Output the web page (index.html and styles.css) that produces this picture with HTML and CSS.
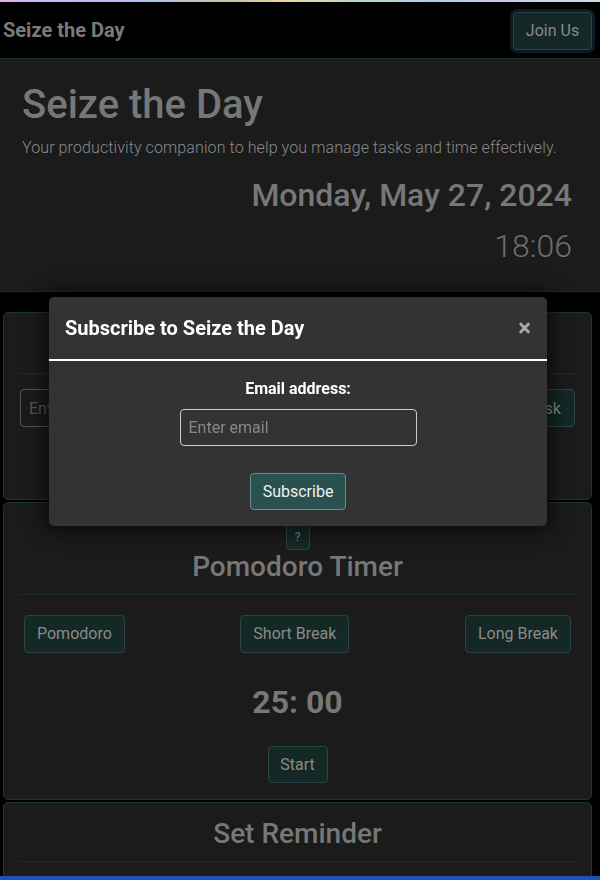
FILE: index.html
```html
<!DOCTYPE html>
<html lang="en">
<head>
<meta charset="utf-8">
<title>Seize the Day</title>
<link rel="stylesheet" href="styles.css">
</head>
<body>
<div class="rainbow"></div>
<nav class="navbar">
  <span class="brand">Seize the Day</span>
  <button class="btn btn-join">Join Us</button>
</nav>
<header class="hero">
  <h1 class="hero-title">Seize the Day</h1>
  <p class="hero-sub">Your productivity companion to help you manage tasks and time effectively.</p>
  <div class="hero-date">Monday, May 27, 2024</div>
  <div class="hero-time">18:06</div>
</header>
<main class="container">
  <section class="card card-tasks">
    <h2 class="card-title">To-Do List</h2>
    <hr class="card-rule">
    <div class="task-row">
      <input class="task-input" type="text" placeholder="Enter a new task">
      <button class="btn btn-add">Add Task</button>
    </div>
  </section>
  <section class="card card-pomo">
    <button class="btn btn-help">?</button>
    <h2 class="card-title">Pomodoro Timer</h2>
    <hr class="card-rule">
    <div class="mode-row">
      <button class="btn btn-mode">Pomodoro</button>
      <button class="btn btn-mode">Short Break</button>
      <button class="btn btn-mode">Long Break</button>
    </div>
    <div class="timer">25: 00</div>
    <button class="btn btn-start">Start</button>
  </section>
  <section class="card card-reminder">
    <h2 class="card-title">Set Reminder</h2>
    <hr class="card-rule">
    <div class="reminder-space"></div>
  </section>
</main>
<footer class="footer"></footer>
<div class="modal">
  <div class="modal-header">
    <h3 class="modal-title">Subscribe to Seize the Day</h3>
    <span class="modal-close">×</span>
  </div>
  <div class="modal-body">
    <label class="modal-label" for="email">Email address:</label>
    <input class="modal-input" id="email" type="email" placeholder="Enter email">
    <button class="btn btn-subscribe">Subscribe</button>
  </div>
</div>
</body>
</html>
```
FILE: styles.css
```css
* { box-sizing: border-box; }
html, body { margin: 0; padding: 0; }
body {
  background: #000;
  font-family: Roboto, "Liberation Sans", sans-serif;
  color: #7a7a7a;
}
.rainbow {
  height: 2px;
  background: linear-gradient(90deg, #d8b4f0 0%, #c8b8f8 12%, #b0c4f0 25%, #c8c0a0 38%, #e8d8a0 48%, #b8d8c8 60%, #a8d0e8 72%, #d0c8f0 85%, #c0e0e8 100%);
}
.navbar {
  height: 56px;
  display: flex;
  align-items: center;
  justify-content: space-between;
  padding: 0 8px 0 3px;
}
.brand {
  font-size: 20px;
  font-weight: 700;
  color: #7a7a7a;
}
.btn {
  font-family: Roboto, "Liberation Sans", sans-serif;
  font-size: 16px;
  color: #8a8a8a;
  background: #142826;
  border: 1px solid #2c4443;
  border-radius: 4px;
  padding: 0 12px;
  height: 38px;
  white-space: nowrap;
  cursor: pointer;
}
.btn-join {
  width: 79px;
  padding: 0;
  box-shadow: 0 0 0 3px #0b1a24;
  margin-top: 1px;
}
.hero {
  background: #1b1b1b;
  border-top: 1px solid #17302e;
  border-bottom: 1px solid #17302e;
  padding: 22px 28px 21px 22px;
}
.hero-title {
  margin: 0;
  font-size: 40px;
  font-weight: 500;
  line-height: 48px;
  color: #777;
}
.hero-sub {
  margin: 7px 0 0;
  font-size: 16px;
  font-weight: 300;
  letter-spacing: 0.1px;
  line-height: 24px;
  color: #8a8a8a;
}
.hero-date {
  margin-top: 11px;
  text-align: right;
  font-size: 32px;
  font-weight: 500;
  line-height: 48px;
  color: #777;
}
.hero-time {
  margin-top: 3px;
  text-align: right;
  font-size: 32px;
  font-weight: 300;
  line-height: 48px;
  color: #6e6e6e;
}
.container {
  padding: 20px 8px 0 3px;
  display: flex;
  flex-direction: column;
  gap: 2px;
}
.card {
  background: #1b1b1b;
  border: 1px solid #1d3533;
  border-radius: 5px;
  padding: 16px 16px;
  display: flex;
  flex-direction: column;
  align-items: center;
}
.card-title {
  margin: 0;
  font-size: 28px;
  font-weight: 500;
  line-height: 34px;
  color: #777;
}
.card-rule {
  width: 100%;
  border: 0;
  border-top: 1px solid #1c302e;
  margin: 10px 0 20px;
}
.card-tasks { height: 188px; }
.card-tasks .card-rule { margin-bottom: 15px; }
.task-row {
  width: 100%;
  display: flex;
  gap: 8px;
}
.task-input {
  flex: 1;
  height: 38px;
  background: transparent;
  border: 1px solid #555;
  border-radius: 4px;
  padding: 0 8px;
  font-family: Roboto, "Liberation Sans", sans-serif;
  font-size: 16px;
  color: #777;
}
.task-input::placeholder { color: #555; }
.btn-add { width: 94px; }
.card-pomo {
  height: 298px;
  padding-top: 22px;
}
.btn-help {
  height: 25px;
  width: 24px;
  padding: 0;
  font-size: 12px;
  border-radius: 0 0 4px 4px;
  border-top: 0;
}
.card-pomo .card-rule { margin-bottom: 20px; }
.mode-row {
  width: 100%;
  display: flex;
  justify-content: space-between;
  padding: 0 4px 0 4px;
}
.timer {
  margin-top: 29px;
  font-size: 32px;
  font-weight: 700;
  line-height: 40px;
  color: #777;
}
.btn-start {
  margin-top: 24px;
  width: 60px;
  padding: 0;
}
.card-reminder {
  height: 120px;
  padding-top: 14px;
}
.reminder-space { height: 40px; }
.footer {
  position: fixed;
  left: 0;
  right: 0;
  bottom: 0;
  height: 4px;
  background: #1a52b5;
}
.modal {
  position: fixed;
  left: 49px;
  top: 297px;
  width: 498px;
  height: 229px;
  background: #333;
  border-radius: 5px;
  box-shadow: 0 0 18px 6px rgba(0, 0, 0, 0.55);
}
.modal-header {
  height: 64px;
  display: flex;
  align-items: center;
  justify-content: space-between;
  padding: 0 16px;
  border-bottom: 2px solid #fff;
}
.modal-title {
  margin: 0;
  font-size: 20px;
  font-weight: 700;
  color: #fff;
}
.modal-close {
  font-size: 24px;
  font-weight: 700;
  color: #aaa;
}
.modal-body {
  display: flex;
  flex-direction: column;
  align-items: center;
  padding-top: 18px;
}
.modal-label {
  font-size: 16px;
  font-weight: 700;
  color: #fff;
  line-height: 20px;
}
.modal-input {
  margin-top: 10px;
  width: 237px;
  height: 37px;
  background: #333;
  border: 1px solid #ccc;
  border-radius: 4px;
  padding: 0 8px;
  font-family: Roboto, "Liberation Sans", sans-serif;
  font-size: 16px;
  color: #eee;
}
.modal-input::placeholder { color: #888; }
.btn-subscribe {
  margin-top: 27px;
  width: 96px;
  height: 37px;
  padding: 0;
  background: #2a5150;
  border-color: #6a8c90;
  color: #f0f0f0;
}
```
